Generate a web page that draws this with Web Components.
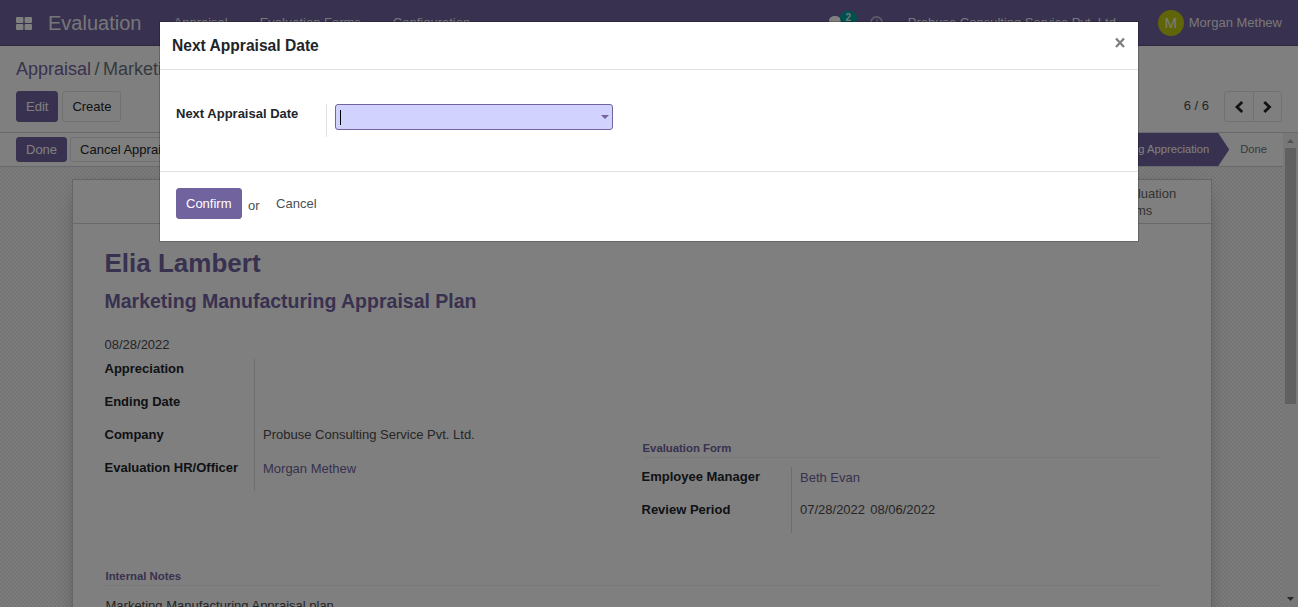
<!DOCTYPE html>
<html lang="en">
<head>
<meta charset="utf-8">
<title>Evaluation</title>
<style>
html,body{margin:0;height:100%;overflow:hidden}
body{font:13px/20px "Liberation Sans",Arial,sans-serif;color:#4c4c4c;--brand:#71639e;--ink:#212529;background:#fff}
</style>
</head>
<body>
<evaluation-app></evaluation-app>
<script>
function define(name, html) {
  const tpl = document.createElement('template');
  tpl.innerHTML = html;
  customElements.define(name, class extends HTMLElement {
    constructor() {
      super();
      this.attachShadow({ mode: 'open' }).appendChild(tpl.content.cloneNode(true));
    }
  });
}

define('ui-button', `<style>
:host{display:inline-flex;align-items:center;box-sizing:border-box;height:31px;padding:0 9px;border:1px solid #dee2e6;border-radius:3px;color:var(--ink);background:#fff;white-space:nowrap;flex:none}
:host([primary]){background:var(--brand);border-color:var(--brand);color:#fff}
:host([small]){height:25px}
:host([link]){background:none;border-color:transparent;color:#495057}
</style><slot></slot>`);

define('nav-bar', `<style>
:host{display:flex;align-items:center;height:45px;flex:none;background:var(--brand);border-bottom:1px solid #5a4f7f;color:rgba(255,255,255,.9);padding:0 16px;box-sizing:content-box;white-space:nowrap}
.apps{margin-top:2px}
.brand{font-size:20px;margin-left:16px;width:125.500px;line-height:30px}
.menu{display:flex;gap:32px}
.sys{margin-left:auto;display:flex;align-items:center}
.chat{position:relative;width:14px;height:13px;display:block}
.chat svg{display:block}
.badge{position:absolute;left:11px;top:-5px;width:17px;height:14px;border-radius:7px;background:#00a09d;font:bold 10px/14px "Liberation Sans",Arial,sans-serif;text-align:center}
.clock{margin:0 25px 0 27px}
.company{width:209px}
.avatar{width:26px;height:26px;border-radius:50%;background:#c0ca13;font-size:15px;line-height:26px;text-align:center;margin:0 5px 0 41px}
svg{flex:none}
</style>
<svg class="apps" width="16" height="13" viewBox="0 0 16 13" fill="#fff"><rect width="7.4" height="6" rx="1"/><rect x="8.6" width="7.4" height="6" rx="1"/><rect y="7" width="7.4" height="6" rx="1"/><rect x="8.6" y="7" width="7.4" height="6" rx="1"/></svg>
<span class="brand">Evaluation</span>
<div class="menu"><span>Appraisal</span><span>Evaluation Forms</span><span>Configuration</span></div>
<div class="sys">
<span class="chat"><svg width="14" height="13" viewBox="0 0 14 13" fill="#fff"><path d="M6 0c3.300 0 6 2 6 4.600S9.300 9.200 6 9.200L2 11l.7-2.500C1 7.700 0 6.300 0 4.600 0 2 2.700 0 6 0z"/></svg><b class="badge">2</b></span>
<svg class="clock" width="13" height="13" viewBox="0 0 13 13" fill="none" stroke="#fff" stroke-opacity=".55" stroke-width="1.700"><circle cx="6.500" cy="6.500" r="5.600"/><path d="M7 3.200V7H4.300" stroke-width="1.200"/></svg>
<span class="company">Probuse Consulting Service Pvt. Ltd.</span>
<span class="avatar">M</span><span>Morgan Methew</span>
</div>`);

define('control-panel', `<style>
:host{display:flex;flex-direction:column;box-sizing:border-box;height:87px;flex:none;padding:10px 16px;border-bottom:1px solid #ced4da;background:#fff}
.crumb{font-size:18px;line-height:26px;color:#6c757d;white-space:nowrap;margin-bottom:9px;word-spacing:-1.500px}
.crumb a{color:var(--brand)}
.row{display:flex;align-items:center;gap:4px}
.count{margin-left:auto;margin-right:11px;height:22px;line-height:20px}
.pager{display:flex}
.pager span{box-sizing:border-box;height:31px;width:30px;border:1px solid #dee2e6;display:flex;align-items:center;justify-content:center}
.pager span:first-child{border-radius:3px 0 0 3px}
.pager span:last-child{border-radius:0 3px 3px 0;margin-left:-1px;width:29px}
</style>
<div class="crumb"><a>Appraisal</a> / Marketing Manufacturing</div>
<div class="row"><ui-button primary>Edit</ui-button><ui-button>Create</ui-button><span class="count">6 / 6</span>
<div class="pager"><span><svg width="12" height="12" viewBox="0 0 12 12" fill="none" stroke="#212529" stroke-width="2.800"><path d="M9.200 1L4 6l5.200 5"/></svg></span><span><svg width="12" height="12" viewBox="0 0 12 12" fill="none" stroke="#212529" stroke-width="2.800"><path d="M2.300 1l5.200 5-5.200 5"/></svg></span></div></div>`);

define('status-bar', `<style>
:host{display:flex;align-items:center;gap:3px;height:33px;flex:none;border-bottom:1px solid #ced4da;background:#fff;padding-left:16px}
.steps{margin-left:auto;display:flex;height:33px;line-height:33px;font-size:11.200px}
.on{box-sizing:border-box;background:var(--brand);color:#fff;padding:0 20px 0 24px;clip-path:polygon(0 0,calc(100% - 11px) 0,100% 50%,calc(100% - 11px) 100%,0 100%)}
.off{padding:0 16px 0 11px;color:#6c757d}
</style>
<ui-button small primary>Done</ui-button><ui-button small>Cancel Appraisal</ui-button>
<div class="steps"><span class="on">Waiting Appreciation</span><span class="off">Done</span></div>`);

define('field-row', `<style>
:host{display:grid;grid-template-columns:149.500px 1fr;height:33px;line-height:20px;white-space:nowrap}
b{color:var(--ink)}
.v{border-left:1px solid #d9dce0;padding-left:8px;box-sizing:border-box}
:host([link]) .v{color:var(--brand);padding-top:1px}
</style><b><slot name="label"></slot></b><div class="v"><slot></slot></div>`);

define('section-title', `<style>
:host{display:block;box-sizing:border-box;height:20px;border-bottom:1px solid #f2f2f2;color:var(--brand);font:bold 11.350px/20px "Liberation Sans",Arial,sans-serif;margin-left:1px}
</style><slot></slot>`);

define('form-sheet', `<style>
:host{display:block;box-sizing:border-box;width:1140px;height:620px;border:1px solid #c8c8d3;background:#fff;box-shadow:0 5px 20px -13px #000;flex:none}
.box{height:43px;border-bottom:1px solid #ced4da;display:flex;justify-content:flex-end}
.stat{width:95.500px;padding-top:5px;line-height:17px;color:#666}
.body{padding:0 50px 0 31.500px}
h1{margin:24px 0 0;font-size:26px;line-height:31px;color:var(--brand)}
h2{margin:9px 0 0;font-size:19.500px;line-height:26px;color:var(--brand)}
.date{margin-top:21px;line-height:20px}
.cols{display:grid;grid-template-columns:537px 1fr;height:173px;margin-top:4px}
.left{padding-right:16px}
.right{padding-top:79px}
.right section-title{margin-bottom:9px}
.notes{margin:10px 0 0 1px;line-height:19px}
</style>
<div class="box"><span class="stat">Evaluation<br>Forms</span></div>
<div class="body">
<h1>Elia Lambert</h1><h2>Marketing Manufacturing Appraisal Plan</h2>
<div class="date">08/28/2022</div>
<div class="cols"><div class="left">
<field-row><span slot="label">Appreciation</span></field-row>
<field-row><span slot="label">Ending Date</span></field-row>
<field-row><span slot="label">Company</span>Probuse Consulting Service Pvt. Ltd.</field-row>
<field-row link><span slot="label">Evaluation HR/Officer</span>Morgan Methew</field-row>
</div><div class="right">
<section-title>Evaluation Form</section-title>
<field-row link><span slot="label">Employee Manager</span>Beth Evan</field-row>
<field-row><span slot="label">Review Period</span>07/28/2022&nbsp;<span style="margin-left:1.500px">08/06/2022</span></field-row>
</div></div>
<section-title style="margin-top:34px">Internal Notes</section-title>
<div class="notes">Marketing Manufacturing Appraisal plan</div>
</div>`);

define('scroll-bar', `<style>
:host{display:flex;flex-direction:column;align-items:center;width:15px;flex:none;background:#f1f1f1}
svg{flex:none}
.thumb{width:11px;height:256px;background:#c1c1c1}
.gap{flex:1}
</style>
<svg width="15" height="15"><path d="M4 10h7L7.500 6z" fill="#a3a3a3"/></svg><div class="thumb"></div><div class="gap"></div><svg width="15" height="15"><path d="M4 5h7L7.500 9z" fill="#505050"/></svg>`);

define('form-view', `<style>
:host{display:flex;flex:1;min-height:0}
.main{flex:1;min-width:0;display:flex;flex-direction:column;overflow:hidden}
.bg{flex:1;min-height:0;overflow:hidden;padding:12px 0 0 72px;background:conic-gradient(#f8f8f8 25%,#e8e8e8 0 50%,#f8f8f8 0 75%,#e8e8e8 0) 0 0/4px 4px}
</style>
<div class="main"><status-bar></status-bar><div class="bg"><form-sheet></form-sheet></div></div><scroll-bar></scroll-bar>`);

define('modal-dialog', `<style>
:host{position:absolute;inset:0;display:flex;justify-content:center;align-items:flex-start;background:rgba(0,0,0,.5);padding-top:21px;box-sizing:border-box}
.box{width:978px;background:#fff;background-clip:padding-box;border:1px solid rgba(0,0,0,.2)}
header{display:flex;justify-content:space-between;box-sizing:border-box;height:48px;border-bottom:1px solid #dee2e6;padding:0 12px}
header b{font-size:15.600px;line-height:47px;color:var(--ink)}
header svg{margin:15px 0 0}
.body{height:101px;box-sizing:border-box;padding:34px 16px 0}
.row{display:grid;grid-template-columns:150px 278px;height:33px}
.row b{color:var(--ink);line-height:20px}
.cell{border-left:1px solid #dee2e6;padding-left:8px;width:278px}
.input{box-sizing:border-box;height:26px;border:1px solid var(--brand);border-radius:3px;background:#d2d2ff;display:flex;align-items:center;justify-content:space-between;padding:0 3px 0 4px}
.caret{width:1px;height:15px;background:#000}
footer{height:70px;box-sizing:border-box;border-top:1px solid #dee2e6;padding:16px 16px 0;display:flex;align-items:flex-start}
.or{margin:8px 6.500px 0 6.500px}
</style>
<div class="box"><header><b>Next Appraisal Date</b><svg width="12" height="12" viewBox="0 0 12 12" stroke="#7f7f7f" stroke-width="2.300"><path d="M2 1.500l8 8.500M10 1.500L2 10"/></svg></header>
<div class="body"><div class="row"><b>Next Appraisal Date</b><div class="cell"><div class="input"><span class="caret"></span><svg width="8" height="4"><path d="M0 0h8L4 4z" fill="#71639e"/></svg></div></div></div></div>
<footer><ui-button primary>Confirm</ui-button><span class="or">or</span><ui-button link>Cancel</ui-button></footer></div>`);

define('evaluation-app', `<style>
:host{position:relative;display:flex;flex-direction:column;height:100vh;overflow:hidden}
</style><nav-bar></nav-bar><control-panel></control-panel><form-view></form-view><modal-dialog></modal-dialog>`);
</script>
</body>
</html>
